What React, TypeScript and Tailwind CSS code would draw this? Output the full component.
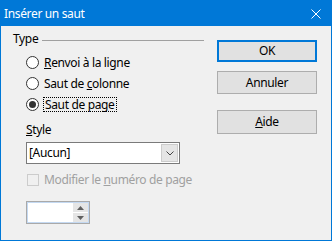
import React from "react";

const font = { fontFamily: '"Noto Sans", "Open Sans", sans-serif', letterSpacing: "-0.35px" };

function Radio({ checked }: { checked?: boolean }) {
  return (
    <span className="w-[13px] h-[13px] rounded-full border border-[#333333] bg-white flex items-center justify-center shrink-0">
      {checked && <span className="w-[7px] h-[7px] rounded-full bg-[#333333]" />}
    </span>
  );
}

export default function App() {
  return (
    <div className="w-[332px] h-[241px] border border-[#0078d7] bg-[#f0f0f0] flex flex-col text-[12px] text-black" style={font}>
      <div className="h-[25px] bg-[#0078d7] flex items-center justify-between pl-[3px] pr-[10px] text-white">
        <span className="text-[12px] leading-none">Insérer un saut</span>
        <svg width="10" height="10" viewBox="0 0 10 10">
          <path d="M0.5 0.5 L9.5 9.5 M9.5 0.5 L0.5 9.5" stroke="white" strokeWidth="1" />
        </svg>
      </div>
      <div className="flex flex-1">
        <div className="w-[203px] pl-[12px] pt-[5px] flex flex-col">
          <div className="flex items-center h-[16px]">
            <span className="leading-none">Type</span>
            <span className="flex-1 h-px bg-[#a0a0a0] ml-[4px] mt-[2px]" />
          </div>
          <div className="pl-[13px] flex flex-col mt-[5px]">
            <div className="h-[21px] flex items-center gap-[5px]">
              <Radio />
              <span><u>R</u>envoi à la ligne</span>
            </div>
            <div className="h-[21px] flex items-center gap-[5px]">
              <Radio />
              <span>Saut de <u>c</u>olonne</span>
            </div>
            <div className="h-[21px] flex items-center gap-[4px]">
              <Radio checked />
              <span className="border border-dotted border-black px-[1px] leading-[13px]">Saut de pa<u>g</u>e</span>
            </div>
            <div className="mt-[7px] h-[16px] flex items-center"><span><u>S</u>tyle</span></div>
            <div className="mt-[4px] w-[154px] h-[22px] border border-[#7a7a7a] bg-white flex items-center justify-between pl-[2px] pr-[1px]">
              <span>[Aucun]</span>
              <span className="w-[17px] h-[18px] bg-[#e5e5e5] border border-[#cccccc] flex items-center justify-center">
                <svg width="8" height="5" viewBox="0 0 8 5">
                  <path d="M0.5 0.5 L4 4 L7.5 0.5" stroke="#444" fill="none" strokeWidth="1" />
                </svg>
              </span>
            </div>
            <div className="mt-[10px] h-[12px] flex items-center gap-[5px] text-[#a0a0a0]">
              <span className="w-[12px] h-[12px] border border-[#cccccc] bg-[#f0f0f0] shrink-0 ml-[1px]" />
              <span>Modifier le <u>n</u>uméro de page</span>
            </div>
            <div className="mt-[15px] w-[64px] h-[23px] border border-[#a9a9a9] p-0">
              <div className="w-full h-full border border-[#c4d9f2] bg-white flex justify-end">
                <div className="w-[15px] flex flex-col gap-px py-0 bg-white">
                  <span className="flex-1 bg-[#e5e5e5] flex items-center justify-center">
                    <svg width="7" height="4" viewBox="0 0 7 4"><path d="M0 4 L3.5 0 L7 4 Z" fill="#606060" /></svg>
                  </span>
                  <span className="flex-1 bg-[#e5e5e5] flex items-center justify-center">
                    <svg width="7" height="4" viewBox="0 0 7 4"><path d="M0 0 L3.5 4 L7 0 Z" fill="#606060" /></svg>
                  </span>
                </div>
              </div>
            </div>
          </div>
        </div>
        <div className="ml-[13px] pt-[14px] flex flex-col w-[100px]">
          <div className="h-[22px] border-2 border-[#0078d7] bg-[#e1e1e1] flex items-center justify-center">OK</div>
          <div className="mt-[9px] h-[23px] border border-[#adadad] bg-[#e1e1e1] flex items-center justify-center">Annuler</div>
          <div className="mt-[16px] h-[24px] border border-[#adadad] bg-[#e1e1e1] flex items-center justify-center"><span><u>A</u>ide</span></div>
        </div>
      </div>
    </div>
  );
}
